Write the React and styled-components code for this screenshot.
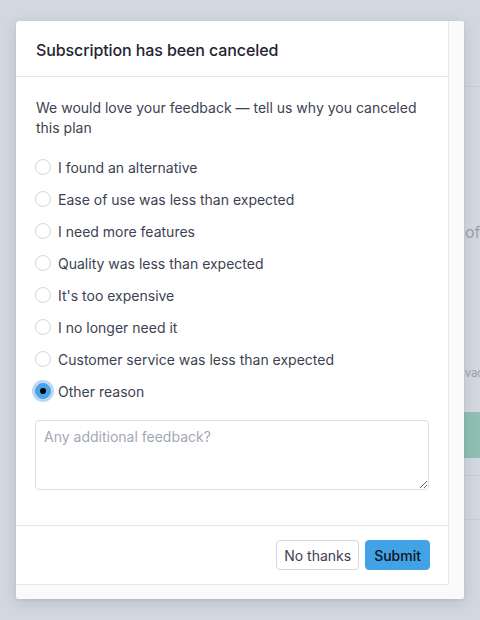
import { useState } from 'react';
import styled, { createGlobalStyle } from 'styled-components';

const GlobalStyle = createGlobalStyle`
    html, body {
        margin: 0;
        padding: 0;
        background: #d3d7df;
        font-family: 'Inter', 'Liberation Sans', sans-serif;
    }
    * {
        box-sizing: border-box;
    }
`

const Screen = styled.div`
    position: relative;
    width: 480px;
    height: 620px;
    overflow: hidden;
    background: #d3d7df;
`

// page behind the overlay, only its right edge shows
const BackPage = styled.div`
    display: flex;
    flex-direction: column;
    padding-left: 465px;
    padding-top: 86px;
    color: #9ba1ac;
    white-space: nowrap;
`

const BackLine = styled.div`
    height: 1px;
    margin-left: -1px;
    background: #c8ccd4;
    margin-top: ${props => props.$top || 0}px;
`

const BackText = styled.div`
    font-size: ${props => props.$size}px;
    line-height: 20px;
    margin-top: ${props => props.$top}px;
`

const BackBar = styled.div`
    height: 46px;
    margin-left: -1px;
    margin-top: ${props => props.$top}px;
    background: #8fbfb3;
`

const Modal = styled.div`
    position: absolute;
    top: 21px;
    left: 16px;
    width: 448px;
    height: 578px;
    background: #fafafa;
    border-radius: 4px 2px 2px 2px;
    box-shadow: 0 4px 14px rgba(40, 48, 70, 0.14), 0 1px 3px rgba(40, 48, 70, 0.08);
    padding: 0 15px 14px 0;
    overflow: hidden;
`

const Panel = styled.div`
    display: flex;
    flex-direction: column;
    height: 100%;
    background: #fff;
    border-right: 1px solid #e6e6e8;
    border-bottom: 1px solid #e6e6e8;
    border-top-left-radius: 4px;
`

const Header = styled.header`
    display: flex;
    align-items: center;
    height: 56px;
    padding: 2px 20px 0;
    border-bottom: 1px solid #e4e7ec;
    h2 {
        margin: 0;
        font-size: 16px;
        font-weight: 500;
        color: #1f2433;
        letter-spacing: -0.1px;
    }
`

const Body = styled.div`
    flex: 1;
    padding: 21px 19px 0;
    p {
        margin: 0 0 0 1px;
        font-size: 14px;
        line-height: 20px;
        color: #3c4252;
    }
`

const ReasonList = styled.div`
    display: flex;
    flex-direction: column;
    margin-top: 13px;
`

const Reason = styled.label`
    display: flex;
    align-items: center;
    gap: 7px;
    height: 32px;
    font-size: 14px;
    color: #3c4252;
    cursor: pointer;
`

const Radio = styled.input`
    appearance: none;
    width: 16px;
    height: 16px;
    margin: 0;
    border-radius: 50%;
    border: 1px solid #d4d7dd;
    background: #fff;
    display: grid;
    place-items: center;
    &:checked {
        background: #4aa3e8;
        border-color: #4aa3e8;
        box-shadow: 0 0 0 3px rgba(99, 170, 230, 0.45);
    }
    &:checked::after {
        content: '';
        width: 6px;
        height: 6px;
        border-radius: 50%;
        background: #000;
    }
`

const Feedback = styled.textarea`
    display: block;
    width: 100%;
    height: 70px;
    margin-top: 13px;
    padding: 6px 8px;
    border: 1px solid #dcdde2;
    border-radius: 4px;
    font-family: 'Inter', 'Liberation Sans', sans-serif;
    font-size: 14px;
    line-height: 20px;
    color: #3c4252;
    resize: vertical;
    outline: none;
    &::placeholder {
        color: #a3a8b4;
    }
`

const Footer = styled.footer`
    display: flex;
    justify-content: flex-end;
    gap: 6px;
    padding: 14px 18px 14px;
    border-top: 1px solid #e4e7ec;
`

const Button = styled.button`
    height: 30px;
    padding: 0 ${props => props.$primary ? 8 : 7}px;
    border-radius: 4px;
    border: 1px solid ${props => props.$primary ? '#41a3e6' : '#d4d7dd'};
    background: ${props => props.$primary ? '#41a3e6' : '#fff'};
    color: ${props => props.$primary ? '#111318' : '#3c4252'};
    font-family: 'Inter', 'Liberation Sans', sans-serif;
    font-size: 14px;
    font-weight: ${props => props.$primary ? 500 : 400};
    cursor: pointer;
`

const reasons = [
    'I found an alternative',
    'Ease of use was less than expected',
    'I need more features',
    'Quality was less than expected',
    "It's too expensive",
    'I no longer need it',
    'Customer service was less than expected',
    'Other reason',
];

export default function App() {
    const [picked, setPicked] = useState('Other reason');

    return (
        <Screen>
            <GlobalStyle />
            <BackPage>
                <BackLine />
                <BackText $size={16} $top={135}>of</BackText>
                <BackText $size={11} $top={121}>vac</BackText>
                <BackBar $top={29} />
                <BackLine $top={17} />
                <BackLine $top={43} />
            </BackPage>
            <Modal>
                <Panel>
                    <Header>
                        <h2>Subscription has been canceled</h2>
                    </Header>
                    <Body>
                        <p>We would love your feedback — tell us why you canceled this plan</p>
                        <ReasonList>
                            {reasons.map(r => (
                                <Reason key={r}>
                                    <Radio
                                        type="radio"
                                        name="reason"
                                        checked={picked === r}
                                        onChange={() => setPicked(r)}
                                    />
                                    {r}
                                </Reason>
                            ))}
                        </ReasonList>
                        <Feedback placeholder="Any additional feedback?" />
                    </Body>
                    <Footer>
                        <Button>No thanks</Button>
                        <Button $primary>Submit</Button>
                    </Footer>
                </Panel>
            </Modal>
        </Screen>
    )
}
